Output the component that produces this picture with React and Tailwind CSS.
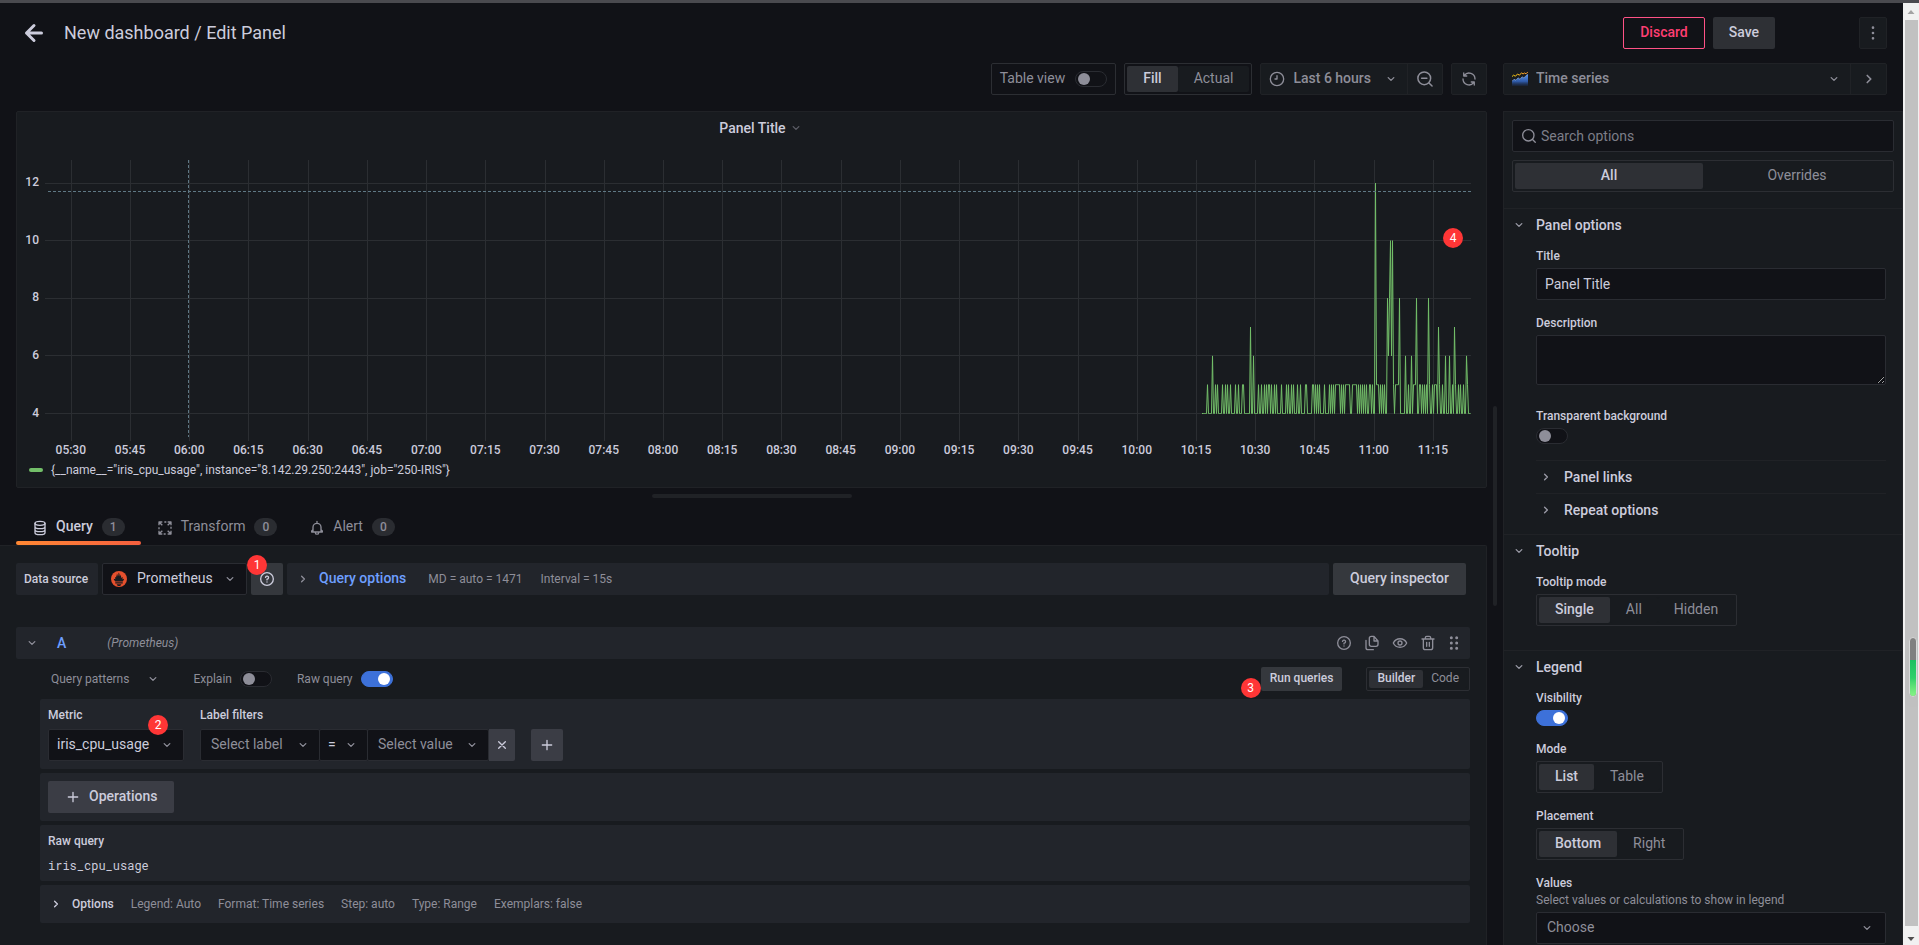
import React from 'react'
import clsx from 'clsx'

/* ---------- icons ---------- */

const Icon = ({ className = 'size-4', children }) => (
  <svg viewBox="0 0 24 24" className={clsx('shrink-0', className)} fill="none" stroke="currentColor" strokeWidth="2" strokeLinecap="round" strokeLinejoin="round" aria-hidden="true">
    {children}
  </svg>
)

const AngleDown = ({ className }) => (
  <Icon className={clsx('size-4', className)}>
    <path d="M7.8 9.9L12 14.1L16.2 9.9" />
  </Icon>
)

const AngleRight = ({ className }) => (
  <Icon className={clsx('size-4', className)}>
    <path d="M9.9 7.8L14.1 12L9.9 16.2" />
  </Icon>
)

const Plus = ({ className }) => (
  <Icon className={className}>
    <path d="M12 5V19M5 12H19" />
  </Icon>
)

const Help = ({ className }) => (
  <Icon className={className}>
    <circle cx="12" cy="12" r="9.5" />
    <path d="M9.8 9.6A2.3 2.3 0 1 1 12 12.3V13.4M12 16.5V16.6" />
  </Icon>
)

const Search = ({ className, minus }) => (
  <Icon className={className}>
    <circle cx="11" cy="11" r="8.5" />
    <path d="M17.3 17.3L21.4 21.4" />
    {minus && <path d="M7.5 11H14.5" />}
  </Icon>
)

const TimeSeriesIcon = () => (
  <svg viewBox="0 0 16 16" className="size-4 shrink-0" fill="none" aria-hidden="true">
    <defs>
      <linearGradient id="ts-area" x1="0" y1="0" x2="0" y2="1">
        <stop offset="0" stopColor="#5794f2" />
        <stop offset="0.6" stopColor="#2f5aa8" />
        <stop offset="1" stopColor="#1b2c50" stopOpacity="0.4" />
      </linearGradient>
      <linearGradient id="ts-line" x1="0" y1="0" x2="1" y2="0">
        <stop offset="0" stopColor="#f2cc0c" />
        <stop offset="1" stopColor="#ff9830" />
      </linearGradient>
    </defs>
    <path d="M0 15V10.5L2 8.5L4 9.5L6 7L8 8.5L10 6L12 7.2L14 4.8L16 3.6V15Z" fill="url(#ts-area)" />
    <path d="M0 10.3L2 8.3L4 9.3L6 6.8L8 8.3L10 5.8L12 7L14 4.6L16 3.4" stroke="#84aff1" strokeWidth="0.7" />
    <path d="M0 5.6L1.5 4.2L3.5 5.2L5.5 3L7.5 4.2L9.5 1.8L11 3L12.5 2L14 2.8L16 0.8" stroke="url(#ts-line)" />
  </svg>
)

const PrometheusIcon = () => (
  <svg viewBox="0 0 24 24" className="size-4 shrink-0" aria-hidden="true">
    <circle cx="12" cy="12" r="12" fill="#e5502d" />
    <path
      fill="#181b1f"
      d="M12 22.5c-1.9 0-3.4-1.2-3.4-2.7h6.8c0 1.5-1.5 2.7-3.4 2.7zM6.4 18.8v-2h11.2v2zM6.4 15.8C4.8 14 4.3 13 4 11.8c1 .2 2 .6 2.8.7-.8-1.4-1-2.4-.8-3.8.5.7.9 1 1.6 1.4-.3-2.5 1.6-3.2 1.2-6 1 .7 1.4 2.5 1.5 4.1.9-1.2 1-3.7.9-5.9 1.7 1.2 1.5 3.3 2.2 5.9.4-.8.5-1.900.4-2.9 1 1 1.4 3.3 1.900 5.2.7-.4 1.400-1 1.700-1.7.4 1.500.1 2.600-.7 3.700.8-.1 2-.5 3-.7-.2 1.200-.9 2.400-2.100 4z"
    />
  </svg>
)

/* ---------- form parts ---------- */

const Switch = ({ label, ...rest }) => (
  <input
    type="checkbox"
    role="switch"
    aria-label={label}
    className="flex h-4 w-8 shrink-0 appearance-none items-center rounded-full border border-[#2a2c32] bg-[#111217] px-0.5 before:block before:size-3 before:rounded-full before:bg-[#8e8e99] checked:border-[#3d71d9] checked:bg-[#3d71d9] checked:before:translate-x-3.5 checked:before:bg-white"
    {...rest}
  />
)

const RadioGroup = ({ name, options, small, full, label }) => (
  <div role="radiogroup" aria-label={label} className={clsx('flex rounded-xs border border-[#2c2e33] p-0.5', full ? 'w-full' : 'w-fit', small ? 'h-6' : 'h-8')}>
    {options.map((option, i) => (
      <label
        key={option}
        className={clsx(
          'relative flex items-center justify-center rounded-xs bg-[#181b1f] pb-0.5 text-[#8e8e99] has-checked:bg-[#2e3035] has-checked:font-medium has-checked:text-[#ccccdc]',
          small ? 'px-2 text-xs' : 'px-4 text-sm',
          full && 'flex-1'
        )}
      >
        <input type="radio" name={name} defaultChecked={i === 0} className="sr-only" />
        {option}
      </label>
    ))}
  </div>
)

const Select = ({ label, value, muted, icon, className, id }) => (
  <div className={clsx('flex h-8 items-center rounded-xs border border-[#2a2c32] bg-[#111217] px-2 text-[#8e8e99]', className)}>
    {icon}
    <select id={id} aria-label={label} className={clsx('min-w-0 flex-1 appearance-none bg-transparent pb-0.5 text-sm outline-none', !muted && 'text-[#ccccdc]')}>
      <option>{value}</option>
    </select>
    <AngleDown />
  </div>
)

const Badge = ({ children, className }) => (
  <span className={clsx('absolute flex size-5 items-center justify-center rounded-full bg-[#ff3636] text-xs text-white', className)}>{children}</span>
)

/* ---------- chart ---------- */

const TIMES = [
  '05:30', '05:45', '06:00', '06:15', '06:30', '06:45', '07:00', '07:15', '07:30', '07:45', '08:00', '08:15',
  '08:30', '08:45', '09:00', '09:15', '09:30', '09:45', '10:00', '10:15', '10:30', '10:45', '11:00', '11:15',
]

// [sample, value, run length]; every other sample idles at 4
const PEAKS = [
  [4, 5], [9, 6], [12, 5], [14, 5], [19, 5], [22, 5], [24, 5], [27, 5], [32, 5], [35, 5], [39, 5, 2], [47, 7], [50, 6],
  [55, 5], [58, 5], [61, 5], [63, 5], [65, 5, 2], [68, 5], [71, 5], [73, 5], [78, 5], [83, 5], [85, 5], [88, 5], [90, 5],
  [94, 5], [97, 5], [102, 5, 2], [109, 5, 2], [112, 5], [114, 5], [116, 5], [121, 5], [126, 5], [128, 5], [130, 5],
  [132, 5, 5], [138, 5], [140, 5], [142, 5, 5], [149, 5, 5], [155, 5], [157, 5], [159, 5], [161, 5], [163, 5],
  [166, 5, 2], [169, 5], [172, 12], [173, 5, 3], [177, 5], [179, 5], [181, 5], [184, 8], [185, 6], [186, 8], [187, 10],
  [188, 6], [189, 10], [190, 5], [192, 5, 4], [196, 8], [202, 6], [205, 5], [208, 6], [210, 5, 3], [213, 8], [216, 5, 2],
  [219, 5], [221, 5], [223, 5], [225, 8], [226, 5], [229, 5], [231, 5, 3], [235, 7], [236, 5], [239, 5], [242, 6],
  [246, 6], [249, 5], [251, 7], [252, 5], [255, 5], [257, 5], [260, 5], [263, 6], [264, 5],
]

const xOf = (i) => 53.8 + i * 59.22
const yOf = (value) => 270.5 - (value - 4) * 28.8

const samples = new Array(268).fill(4)
PEAKS.forEach(([start, value, run = 1]) => samples.fill(value, start, start + run))
const series = samples.map((value, i) => `${1186.5 + i},${yOf(value)}`).join(' ')

const Chart = () => (
  <svg viewBox="0 0 1469 318" className="block w-full" role="img" aria-label="iris_cpu_usage over time">
    <g stroke="#2b2e32" shapeRendering="crispEdges">
      {[4, 6, 8, 10, 12].map((value) => (
        <line key={value} x1="28" x2="1454" y1={Math.floor(yOf(value)) + 0.5} y2={Math.floor(yOf(value)) + 0.5} />
      ))}
      {TIMES.map((time, i) => (
        <line key={time} y1="17" y2="298" x1={Math.round(xOf(i)) + 0.5} x2={Math.round(xOf(i)) + 0.5} />
      ))}
    </g>
    <g fill="#ccccdc" fontSize="12" fontWeight="500">
      {[4, 6, 8, 10, 12].map((value) => (
        <text key={value} x="22" y={yOf(value) + 3} textAnchor="end">{value}</text>
      ))}
      {TIMES.map((time, i) => (
        <text key={time} x={xOf(i)} y="311" textAnchor="middle">{time}</text>
      ))}
    </g>
    <polyline points={`1185,${yOf(4)} ${series}`} stroke="#73bf69" fill="none" strokeLinejoin="round" />
    <g stroke="#5f7884" strokeDasharray="3 2" shapeRendering="crispEdges">
      <line x1="31" x2="1454" y1="48.5" y2="48.5" />
      <line x1="171.5" x2="171.5" y1="17" y2="294" />
    </g>
  </svg>
)

const Panel = () => (
  <section className="relative ml-4 rounded-xs border border-[#202226] bg-[#181b1f] pb-2">
    <h2 className="flex h-[31px] items-center justify-center gap-0.5 pl-5 text-sm font-medium">
      Panel Title
      <AngleDown className="text-[#5c5d66]" />
    </h2>
    <Chart />
    <button className="flex h-[18px] items-center pl-3 text-xs">
      <span className="mr-2 h-1 w-3.5 rounded-xs bg-[#73bf69]"></span>
      {'{__name__="iris_cpu_usage", instance="8.142.29.250:2443", job="250-IRIS"}'}
    </button>
    <Badge className="right-[23px] top-[116px]">4</Badge>
  </section>
)

/* ---------- header ---------- */

const Header = () => (
  <header className="flex h-8 items-center pl-4 pr-4">
    <button aria-label="Back">
      <Icon className="size-9">
        <path d="M17 12H7M12 7L7 12L12 17" />
      </Icon>
    </button>
    <h1 className="ml-3 flex-1 text-lg">New dashboard / Edit Panel</h1>
    <button className="h-8 rounded-xs border border-[#ff5286] px-4 pb-0.5 text-sm font-medium text-[#ff3e72]">Discard</button>
    <button className="ml-2 h-8 rounded-xs bg-[#2e3035] px-4 pb-0.5 text-sm font-medium">Save</button>
    <button aria-label="More" className="ml-[84px] flex h-8 w-7 items-center justify-center rounded-xs border border-[#202226] bg-[#181b1f] text-[#8e8e99]">
      <Icon>
        <path strokeWidth="4" d="M12 4V4.01M12 12V12.01M12 20V20.01" />
      </Icon>
    </button>
  </header>
)

const Toolbar = () => (
  <div className="mt-3.5 flex h-8 items-center pr-4 text-sm text-[#8e8e99]">
    <div className="flex flex-1 justify-end gap-2">
      <label className="flex h-8 items-center gap-2.5 rounded-xs border border-[#2c2e33] px-2">
        <span className="pb-0.5">Table view</span>
        <Switch />
      </label>
      <RadioGroup name="fit" label="Panel size" options={['Fill', 'Actual']} />
      <div className="flex rounded-xs border border-[#202226] bg-[#181b1f]">
        <button className="flex items-center px-2 font-medium">
          <Icon className="mr-2 size-4">
            <circle cx="12" cy="12" r="10" />
            <path d="M12 7V12H9" />
          </Icon>
          <span className="pb-0.5">Last 6 hours</span>
          <AngleDown className="ml-3" />
        </button>
        <button aria-label="Zoom out" className="border-l border-[#202226] px-2">
          <Search className="size-[18px]" minus />
        </button>
      </div>
      <button aria-label="Refresh" className="flex h-8 w-9 items-center justify-center rounded-xs border border-[#202226] bg-[#181b1f]">
        <Icon>
          <path d="M3 12A9 9 0 0 0 19 17.5M4.12 3V7.5H8.62M21 12A9 9 0 0 0 5 6.5M19.9 21V16.5H15.4" />
        </Icon>
      </button>
    </div>
    <div className="ml-4 flex h-8 w-96 rounded-xs border border-[#202226] bg-[#181b1f]">
      <div className="flex flex-1 items-center px-2">
        <TimeSeriesIcon />
        <select aria-label="Visualization" className="ml-2 flex-1 appearance-none bg-transparent pb-0.5 font-medium outline-none">
          <option>Time series</option>
        </select>
        <AngleDown />
      </div>
      <button aria-label="Close options" className="flex w-9 items-center justify-center border-l border-[#202226]">
        <AngleRight className="size-5" />
      </button>
    </div>
  </div>
)

/* ---------- query editor ---------- */

const Tab = ({ label, count, active, children }) => (
  <button role="tab" aria-selected={!!active} className="flex h-10 flex-col">
    <span className={clsx('flex h-9 items-center px-4 pt-2 text-sm', active ? 'font-medium text-[#ccccdc]' : 'text-[#8e8e99]')}>
      <Icon className="mr-2 mt-0.5 size-4">{children}</Icon>
      <span className="pb-0.5">{label}</span>
      <span className="ml-[9px] rounded-full bg-[#2a2c31] px-2 py-px text-xs font-medium leading-4 text-[#8e8e99]">{count}</span>
    </span>
    {active && <span className="h-1 w-full rounded-xs bg-linear-to-r from-[#ff8833] to-[#f55f3e]"></span>}
  </button>
)

const Tabs = () => (
  <div role="tablist" className="flex pl-4">
    <Tab label="Query" count="1" active>
      <ellipse cx="12" cy="5" rx="7.5" ry="3" />
      <path d="M4.5 5V19C4.5 20.7 8 22 12 22S19.5 20.7 19.5 19V5M4.5 10C4.5 11.7 8 13 12 13S19.5 11.7 19.5 10M4.5 14.5C4.5 16.2 8 17.5 12 17.5S19.5 16.2 19.5 14.5" />
    </Tab>
    <Tab label="Transform" count="0">
      <path strokeLinecap="butt" d="M3 8V3H8M4 4L8 8M16 3H21V8M20 4L16 8M21 16V21H16M20 20L16 16M8 21H3V16M4 20L8 16M3 11V14M21 10V13M11 3H14M10 21H13" />
    </Tab>
    <Tab label="Alert" count="0">
      <path d="M12 2V5M6 17V11A6 6 0 0 1 18 11V17M4 18H20V16.5L18 14.5M4 18V16.5L6 14.5M9.5 19C9.5 22 14.5 22 14.5 19" />
    </Tab>
  </div>
)

const DataSourceRow = () => (
  <div className="flex h-8 gap-1 pr-1 text-xs">
    <label htmlFor="data-source" className="flex w-[82px] items-center rounded-xs bg-[#22252b] px-2 font-medium">Data source</label>
    <Select id="data-source" value="Prometheus" icon={<span className="mr-2.5"><PrometheusIcon /></span>} className="w-[145px]" />
    <button aria-label="Open data source help" className="relative flex w-8 items-center justify-center rounded-xs bg-[#35383d]">
      <Help />
      <Badge className="-left-1 -top-2">1</Badge>
    </button>
    <button className="flex flex-1 items-center rounded-xs bg-[#22252b] px-2 text-[#8e8e99]">
      <AngleRight />
      <span className="ml-2 pb-0.5 text-sm font-medium text-[#6e9fff]">Query options</span>
      <span className="ml-[22px]">MD = auto = 1471</span>
      <span className="ml-[18px]">Interval = 15s</span>
    </button>
    <button className="rounded-xs bg-[#35383d] px-[17px] pb-0.5 text-sm font-medium">Query inspector</button>
  </div>
)

const QueryHeader = () => (
  <div className="mt-8 flex h-8 items-center rounded-xs bg-[#22252b] px-2 text-[#8e8e99]">
    <button aria-label="Collapse query">
      <AngleDown />
    </button>
    <span className="ml-[17px] text-sm font-medium text-[#6e9fff]">A</span>
    <em className="ml-[41px] flex-1 text-xs">(Prometheus)</em>
    <div className="flex items-center gap-3">
      <button aria-label="Help">
        <Help />
      </button>
      <button aria-label="Duplicate query">
        <Icon>
          <path d="M8 4V14A3 3 0 0 0 11 17H18A3 3 0 0 0 21 14V9L15 2H11A3 3 0 0 0 8 5M15 2V9H21M3 8V19A3 3 0 0 0 6 22H14" />
        </Icon>
      </button>
      <button aria-label="Disable query">
        <Icon>
          <path d="M2 12C6 3.5 18 3.5 22 12C18 20.5 6 20.5 2 12Z" />
          <circle cx="12" cy="12" r="3" />
        </Icon>
      </button>
      <button aria-label="Remove query">
        <Icon>
          <path d="M3 6H21M8 6V4A2 2 0 0 1 10 2H14A2 2 0 0 1 16 4V6M5 6V19A3 3 0 0 0 8 22H16A3 3 0 0 0 19 19V6M10 11V17M14 11V17" />
        </Icon>
      </button>
      <button aria-label="Drag to reorder" className="-ml-0.5">
        <Icon>
          <path strokeWidth="4.5" d="M8 4V4.01M16 4V4.01M8 12V12.01M16 12V12.01M8 20V20.01M16 20V20.01" />
        </Icon>
      </button>
    </div>
  </div>
)

const QueryToolbar = () => (
  <div className="my-2 flex h-6 items-center pl-[35px] text-xs text-[#8e8e99]">
    <button className="flex items-center gap-4">
      Query patterns
      <AngleDown />
    </button>
    <label className="ml-8 flex items-center gap-2">
      Explain
      <Switch />
    </label>
    <label className="ml-[25px] flex items-center gap-2">
      Raw query
      <Switch defaultChecked />
    </label>
    <div className="ml-auto flex gap-6">
      <button className="relative h-6 rounded-xs bg-[#35383d] px-[9px] pb-0.5 font-medium text-[#ccccdc]">
        Run queries
        <Badge className="-left-5 top-[11px] font-normal">3</Badge>
      </button>
      <RadioGroup name="editor" label="Editor mode" options={['Builder', 'Code']} small />
    </div>
  </div>
)

const QueryBuilder = () => (
  <div className="ml-6 flex flex-col gap-1 text-xs *:rounded-xs *:bg-[#22252b]">
    <div className="flex gap-4 p-2">
      <div className="relative">
        <label htmlFor="metric" className="mb-1.5 block font-medium leading-4">Metric</label>
        <Select id="metric" value="iris_cpu_usage" className="w-[136px]" />
        <Badge className="right-4 top-2">2</Badge>
      </div>
      <div>
        <div className="mb-1.5 font-medium leading-4">Label filters</div>
        <div className="flex">
          <Select label="Label" value="Select label" muted className="w-[120px] pl-2.5" />
          <Select label="Operator" value="=" className="-ml-px w-[49px]" />
          <Select label="Value" value="Select value" muted className="-ml-px w-[122px] pl-2.5" />
          <button aria-label="Remove filter" className="flex h-8 w-[26px] items-center justify-center rounded-r-xs bg-[#3b3d45]">
            <Icon>
              <path d="M7 7L17 17M17 7L7 17" />
            </Icon>
          </button>
          <button aria-label="Add filter" className="ml-4 flex h-8 w-8 items-center justify-center rounded-xs bg-[#3b3d45]">
            <Plus />
          </button>
        </div>
      </div>
    </div>
    <div className="p-2">
      <button className="flex h-8 items-center gap-2 rounded-xs bg-[#3b3d45] px-[17px] text-sm font-medium">
        <Plus />
        <span className="pb-0.5">Operations</span>
      </button>
    </div>
    <div className="p-2">
      <div className="mb-2 font-medium leading-4">Raw query</div>
      <code className="block font-['Roboto_Mono','Liberation_Mono',monospace] text-xs leading-4">iris_cpu_usage</code>
    </div>
    <button className="flex h-[38px] items-center gap-[17px] px-2 text-[#8e8e99]">
      <span className="flex items-center gap-2 font-medium text-[#ccccdc]">
        <AngleRight />
        Options
      </span>
      <span>Legend: Auto</span>
      <span>Format: Time series</span>
      <span>Step: auto</span>
      <span>Type: Range</span>
      <span>Exemplars: false</span>
    </button>
  </div>
)

/* ---------- options pane ---------- */

const Section = ({ title, children }) => (
  <section className="border-t border-[#202226] pb-2">
    <button className="flex h-8 w-full items-center pl-[7px] text-sm font-medium">
      <AngleDown className="mr-[9px] text-[#9a9aa6]" />
      {title}
    </button>
    <div className="pl-8 pr-4 pt-2">{children}</div>
  </section>
)

const Field = ({ label, htmlFor, description, children }) => (
  <div className="mb-4">
    <label htmlFor={htmlFor} className="block text-xs font-medium leading-[15px]">{label}</label>
    {description && <p className="mt-0.5 text-xs leading-[15px] text-[#8e8e99]">{description}</p>}
    <div className="mt-1">{children}</div>
  </div>
)

const SubSection = ({ title }) => (
  <button className="flex h-[33px] w-full items-center gap-2.5 border-t border-[#202226] pl-0.5 text-sm font-medium">
    <AngleRight className="text-[#9a9aa6]" />
    {title}
  </button>
)

const OptionsPane = () => (
  <aside className="ml-4 w-[400px] shrink-0 overflow-hidden border border-b-0 border-[#202226] bg-[#181b1f]">
    <div className="flex flex-col gap-2 p-2 pb-4">
      <div className="flex h-8 items-center gap-1 rounded-xs border border-[#2a2c32] bg-[#111217] px-2 text-[#8e8e99]">
        <Search />
        <input type="text" aria-label="Search options" placeholder="Search options" className="min-w-0 flex-1 bg-transparent text-sm outline-none placeholder:text-[#7d7e88]" />
      </div>
      <RadioGroup name="scope" label="Options scope" options={['All', 'Overrides']} full />
    </div>
    <Section title="Panel options">
      <Field label="Title" htmlFor="title">
        <input id="title" type="text" defaultValue="Panel Title" className="block h-8 w-full rounded-xs border border-[#2a2c32] bg-[#111217] px-2 text-sm outline-none" />
      </Field>
      <Field label="Description" htmlFor="description">
        <textarea id="description" className="mb-6 block h-[50px] w-full resize-y rounded-xs border border-[#2a2c32] bg-[#111217] p-2 text-sm outline-none"></textarea>
      </Field>
      <Field label="Transparent background" htmlFor="transparent">
        <Switch id="transparent" />
      </Field>
      <SubSection title="Panel links" />
      <SubSection title="Repeat options" />
    </Section>
    <Section title="Tooltip">
      <Field label="Tooltip mode">
        <RadioGroup name="tooltip" label="Tooltip mode" options={['Single', 'All', 'Hidden']} />
      </Field>
    </Section>
    <Section title="Legend">
      <Field label="Visibility" htmlFor="visibility">
        <Switch id="visibility" defaultChecked />
      </Field>
      <Field label="Mode">
        <RadioGroup name="mode" label="Mode" options={['List', 'Table']} />
      </Field>
      <Field label="Placement">
        <RadioGroup name="placement" label="Placement" options={['Bottom', 'Right']} />
      </Field>
      <Field label="Values" htmlFor="values" description="Select values or calculations to show in legend">
        <Select id="values" value="Choose" muted className="px-2.5" />
      </Field>
    </Section>
  </aside>
)

const Scrollbar = () => (
  <div className="relative flex w-4 shrink-0 flex-col items-center bg-[#f1f1f1]" aria-hidden="true">
    <svg viewBox="0 0 16 17" className="h-[17px] w-4 shrink-0">
      <path d="M4.5 11L8 7L11.5 11Z" fill="#a3a3a3" />
    </svg>
    <div className="w-[13px] flex-1 bg-[#c1c1c1]"></div>
    <svg viewBox="0 0 16 19" className="h-[19px] w-4 shrink-0">
      <path d="M4.5 11L8 15L11.5 11Z" fill="#505050" />
    </svg>
    <div className="absolute bottom-[248px] right-0.5 flex h-[60px] w-2 flex-col overflow-hidden rounded-full border border-[#d8d8d8] bg-[#808080] shadow-lg">
      <div className="mt-auto h-9 bg-linear-to-b from-[#1cbf62] via-[#2fd06a] to-[#86f486]"></div>
    </div>
  </div>
)

const App = () => {
  return (
    <div className="flex h-screen overflow-hidden border-t-[3px] border-[#4a4a4f] bg-[#111217] font-[Roboto,'Liberation_Sans',sans-serif] text-[#ccccdc]">
      <div className="flex min-w-0 flex-1 flex-col pt-3.5">
        <Header />
        <Toolbar />
        <div className="mt-4 flex min-h-0 flex-1">
          <main className="flex min-w-0 flex-1 flex-col">
            <Panel />
            <div className="flex h-[17px] shrink-0 justify-center pl-4 pt-1.5">
              <div className="h-1 w-[200px] rounded-full bg-[#202226]"></div>
            </div>
            <Tabs />
            <div className="min-h-0 flex-1 overflow-hidden rounded-tr-xs border-r border-t border-[#202226] bg-[#181b1f] pl-4 pr-4 pt-[17px]">
              <DataSourceRow />
              <QueryHeader />
              <QueryToolbar />
              <QueryBuilder />
            </div>
          </main>
          <div className="relative">
            <div className="absolute left-1.5 top-[295px] h-[200px] w-1 rounded-full bg-[#202226]"></div>
          </div>
          <OptionsPane />
        </div>
      </div>
      <Scrollbar />
    </div>
  )
}

export default App
